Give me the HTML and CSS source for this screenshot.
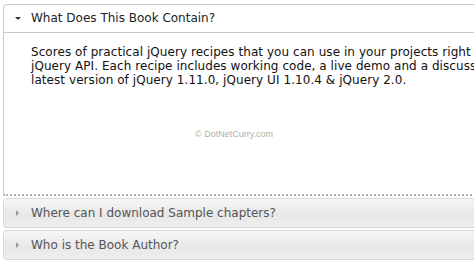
FILE: index.html
```html
<!DOCTYPE html>
<html>
<head>
<meta charset="utf-8">
<link rel="stylesheet" href="styles.css">
</head>
<body>
<div class="accordion">
  <div class="header active"><span class="tri down"></span>What Does This Book Contain?</div>
  <div class="panel">
    <p>Scores of practical jQuery recipes that you can use in your projects right away,<br>jQuery API. Each recipe includes working code, a live demo and a discussion<br>latest version of jQuery 1.11.0, jQuery UI 1.10.4 &amp; jQuery 2.0.</p>
    <div class="mark">© DotNetCurry.com</div>
  </div>
  <div class="header"><span class="tri right"></span>Where can I download Sample chapters?</div>
  <div class="header"><span class="tri right"></span>Who is the Book Author?</div>
</div>
</body>
</html>
```
FILE: styles.css
```css
html, body { margin: 0; padding: 0; background: #fff; overflow: hidden; }
body { width: 474px; height: 267px; }
.accordion {
  margin: 4px 0 0 3px;
  width: 560px;
  font-family: "DejaVu Sans", Verdana, sans-serif;
  color: #222;
}
.header {
  height: 28px;
  line-height: 28px;
  font-size: 12px;
  border: 1px solid #d6d6d6;
  border-radius: 4px;
  background: linear-gradient(#f5f5f5, #e8e8e8 60%, #eeeeee);
  color: #555;
  padding-left: 27px;
  position: relative;
  margin-top: 2px;
}
.header.active {
  height: 27px;
  line-height: 27px;
  margin-top: 0;
  background: #fff;
  color: #222;
  border-color: #c6c6c6;
  border-radius: 4px 4px 0 0;
}
.tri {
  position: absolute;
  width: 0; height: 0;
}
.tri.down {
  border-left: 3px solid transparent;
  border-right: 3px solid transparent;
  border-top: 3px solid #333;
  top: 12px;
  left: 11px;
}
.tri.right {
  border-top: 3px solid transparent;
  border-bottom: 3px solid transparent;
  border-left: 3px solid #999;
  top: 11px;
  left: 12px;
}
.panel {
  border-left: 1px solid #c6c6c6;
  border-bottom: 2px dotted #b0b0b0;
  height: 161px;
  padding: 0 0 0 27px;
  position: relative;
}
.panel p {
  margin: 0;
  padding-top: 12px;
  font-size: 12px;
  line-height: 14px;
  letter-spacing: 0.06px;
  color: #111;
  white-space: nowrap;
}
.mark {
  position: absolute;
  left: 191px;
  top: 96px;
  font-family: "Liberation Sans", Arial, sans-serif;
  font-size: 9px;
  color: #b0b0b0;
}
```
